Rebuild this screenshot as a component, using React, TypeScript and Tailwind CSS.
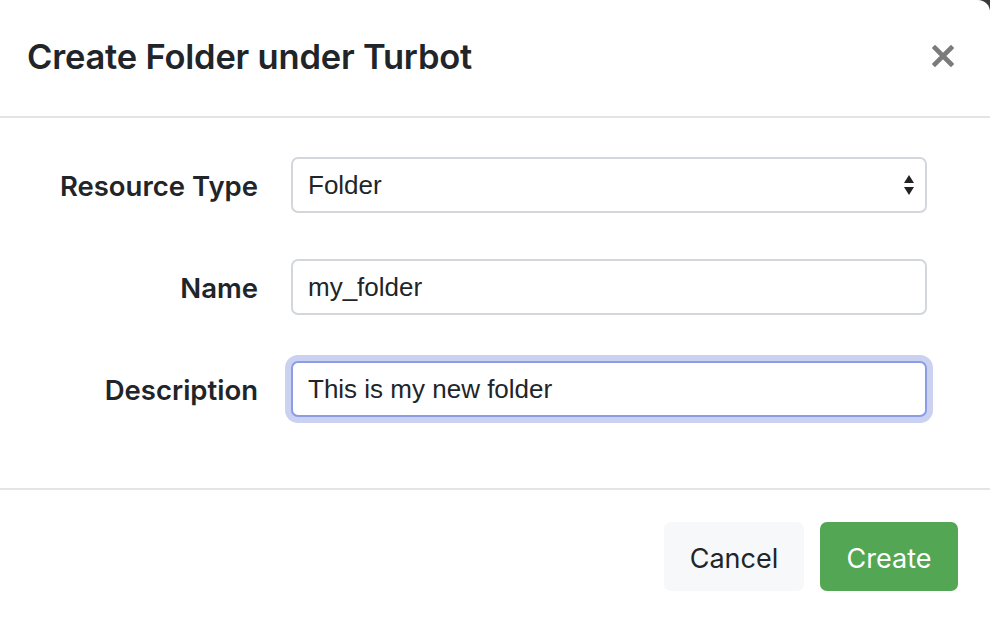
import React from 'react';

const inputBase =
    'w-[636px] h-[56px] rounded-[7px] border-2 bg-white px-[15px] text-[26px] text-[#212529] outline-none';

const FormRow: React.FC<{ label: string; children: React.ReactNode }> = ({ label, children }) => (
    <div className="flex items-center gap-[33px]">
        <label className="w-[258px] mt-[3px] text-right text-[27.5px] font-semibold text-[#212529]">{label}</label>
        {children}
    </div>
);

export default function App() {
    return (
        <div className="w-[990px] h-[620px] bg-[#3a3a3a] font-['Inter',sans-serif]">
            <div className="w-full h-full bg-white rounded-tr-[12px] flex flex-col">
                {/* Header */}
                <div className="h-[118px] flex items-center justify-between pl-[27px] pr-[36px] border-b-2 border-[#e2e5e8]">
                    <h5 className="text-[34.5px] font-semibold text-[#212529] tracking-[-0.2px] -mt-[2px]">
                        Create Folder under Turbot
                    </h5>
                    <button className="-mt-[4px]" aria-label="Close">
                        <svg width="22" height="22" viewBox="0 0 22 22">
                            <path d="M3 3 L19 19 M19 3 L3 19" stroke="#7b7b7b" strokeWidth="4.6" strokeLinecap="square" />
                        </svg>
                    </button>
                </div>

                {/* Body */}
                <div className="flex flex-col gap-[46px] pt-[39px] pb-[71px]">
                    <FormRow label="Resource Type">
                        <div className={`${inputBase} border-[#d3d7db] flex items-center justify-between font-['Liberation_Sans',sans-serif]`}>
                            <span>Folder</span>
                            <svg width="12" height="22" viewBox="0 0 12 22" className="mr-[-5px]">
                                <path d="M6 1 L11 9 L1 9 Z" fill="#222" />
                                <path d="M1 13 L11 13 L6 21 Z" fill="#222" />
                            </svg>
                        </div>
                    </FormRow>
                    <FormRow label="Name">
                        <input
                            className={`${inputBase} border-[#d3d7db] font-['Liberation_Sans',sans-serif]`}
                            defaultValue="my_folder"
                        />
                    </FormRow>
                    <FormRow label="Description">
                        <input
                            className={`${inputBase} border-[#8c9ce6] shadow-[0_0_0_6px_#cbd1f0] font-['Liberation_Sans',sans-serif]`}
                            defaultValue="This is my new folder"
                        />
                    </FormRow>
                </div>

                {/* Footer */}
                <div className="border-t-2 border-[#e2e5e8] flex justify-end gap-[16px] pt-[32px] pr-[32px]">
                    <button className="w-[140px] h-[69px] pt-[5px] rounded-[7px] bg-[#f7f8fa] text-[27px] text-[#212529]">
                        Cancel
                    </button>
                    <button className="w-[138px] h-[69px] pt-[5px] rounded-[7px] bg-[#53a653] text-[27px] text-white">
                        Create
                    </button>
                </div>
            </div>
        </div>
    );
}
